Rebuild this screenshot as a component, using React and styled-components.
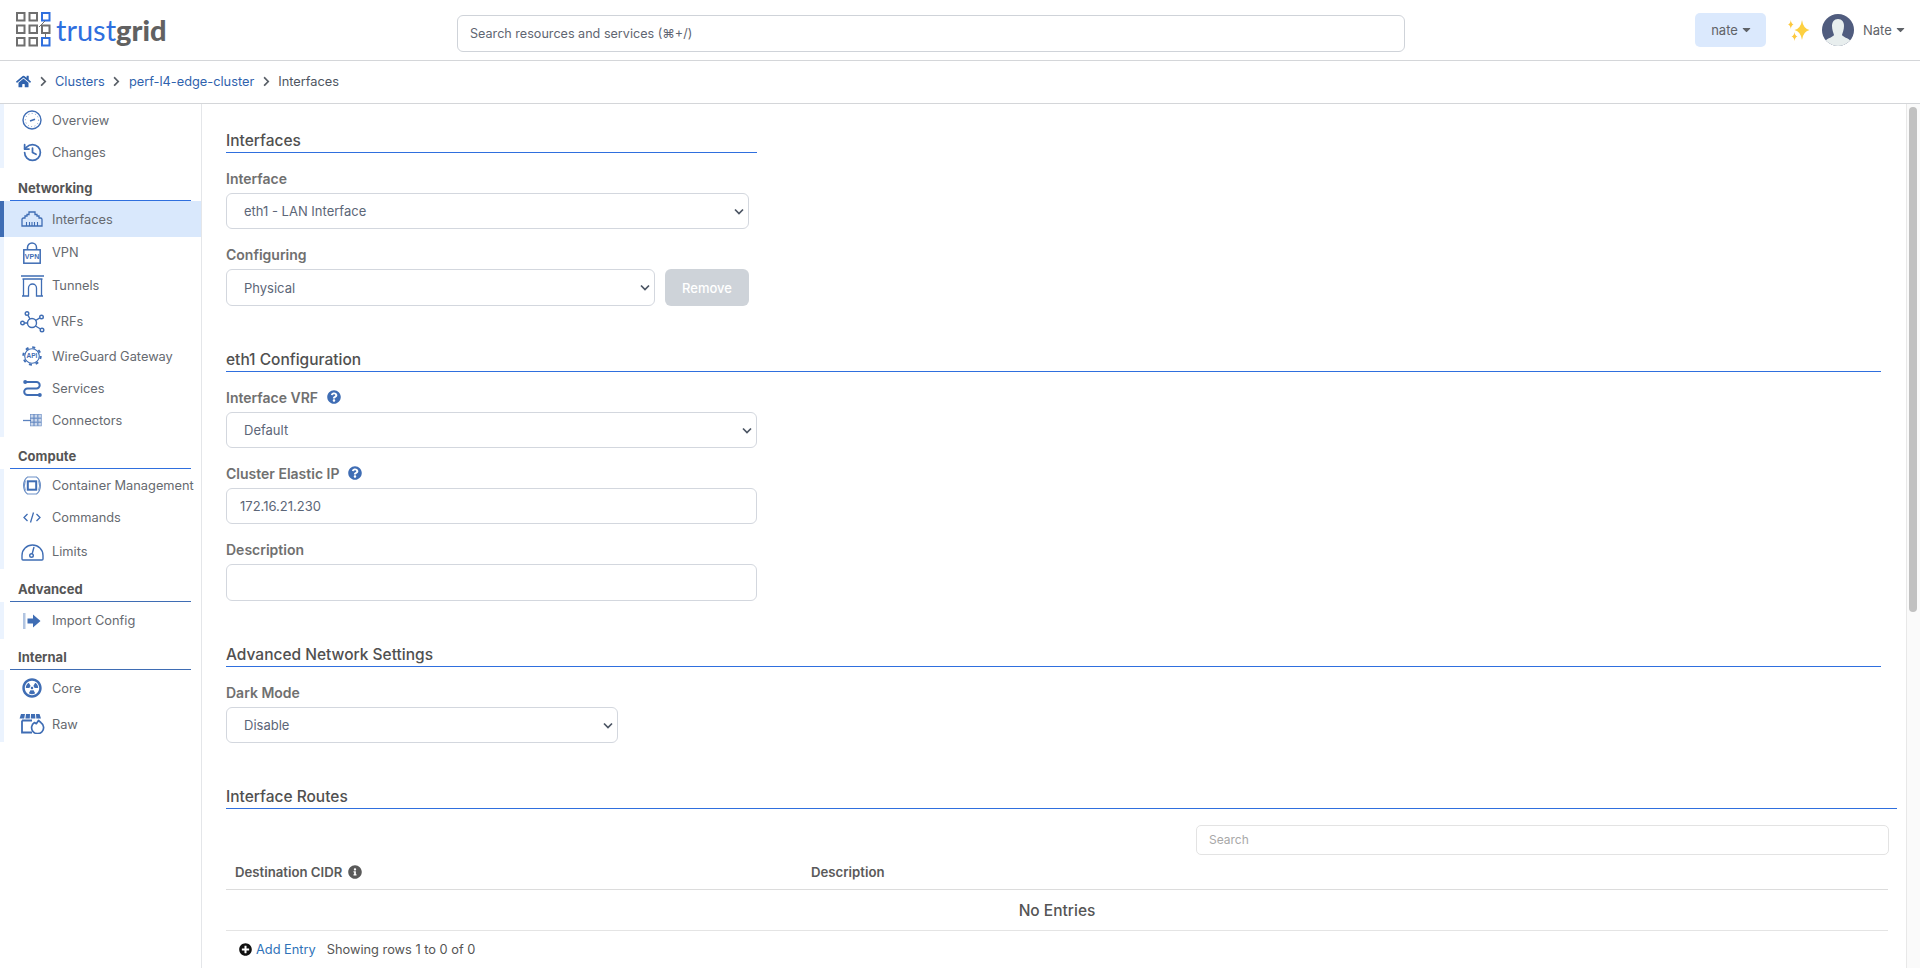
import React from "react";
import styled, { createGlobalStyle } from "styled-components";
import { FaHome, FaChevronRight, FaQuestionCircle, FaInfoCircle, FaPlusCircle, FaRadiationAlt, FaCaretDown } from "react-icons/fa";
import { History } from "lucide-react";

const BLUE = "#3f6db4";
const LINE = "#2f6fde";

const GlobalStyle = createGlobalStyle`
  html, body { margin: 0; height: 100%; overflow: hidden; background: #fff; }
  body { font-family: Inter, "Liberation Sans", sans-serif; font-size: 13px; color: #5f5f5f; }
  * { box-sizing: border-box; }
`;

const Page = styled.div`
  height: 100vh;
  display: flex;
  flex-direction: column;
`;

const Header = styled.header`
  height: 61px;
  flex: none;
  display: flex;
  align-items: center;
  padding: 0 16px 1px;
  border-bottom: 1px solid #d4d6d9;
`;

const Logo = styled.div`
  width: 441px;
  flex: none;
  display: flex;
  align-items: center;
  gap: 5px;
`;

const LogoText = styled.div`
  font-family: Lato, sans-serif;
  font-size: 29px;
  line-height: 34px;
  color: #2f6fde;
  font-weight: 400;
  b {
    font-weight: 900;
    color: #616161;
  }
`;

const SearchBox = styled.input`
  width: 948px;
  height: 37px;
  flex: none;
  margin-top: 7px;
  border: 1px solid #cfd3d9;
  border-radius: 6px;
  padding: 0 12px;
  font: 12.6px Inter, sans-serif;
  color: #5f6672;
  &::placeholder {
    color: #5f6672;
    opacity: 1;
  }
`;

const HeaderRight = styled.div`
  flex: 1;
  display: flex;
  align-items: center;
  padding-left: 290px;
`;

const TenantButton = styled.div`
  width: 71px;
  height: 34px;
  flex: none;
  display: flex;
  align-items: center;
  justify-content: center;
  gap: 2px;
  padding-left: 3px;
  background: #dbe9fd;
  border-radius: 5px;
  color: #5f6368;
`;

const UserName = styled.div`
  display: flex;
  align-items: center;
  gap: 2px;
  margin-left: 9px;
  color: #5f6368;
`;

const Sparkle = styled.svg`
  margin: 2px 12px 0 22px;
  flex: none;
`;

const Crumbs = styled.nav`
  height: 43px;
  flex: none;
  display: flex;
  align-items: center;
  padding: 0 16px 1px;
  border-bottom: 1px solid #d4d6d9;
  font-size: 12.8px;
  color: #4e5561;
`;

const CrumbLink = styled.a`
  color: #2f62ad;
`;

const CrumbSep = styled.span`
  display: flex;
  color: #5a6068;
  margin: 0 6.5px;
`;

const Body = styled.div`
  flex: 1;
  min-height: 0;
  display: flex;
`;

const Sidebar = styled.aside`
  width: 202px;
  flex: none;
  border-right: 1px solid #e4e6e9;
`;

const NavGroup = styled.ul`
  list-style: none;
  margin: 0;
  padding: 0;
  border-left: 4px solid #ebf3fe;
`;

const NavItem = styled.li`
  height: ${({ $h }) => $h || 32}px;
  margin-left: -4px;
  width: 201px;
  display: flex;
  align-items: center;
  padding-left: 14px;
  border-left: 4px solid ${({ $active }) => ($active ? "#3f6db4" : "transparent")};
  background: ${({ $active }) => ($active ? "#d9e8fc" : "none")};
  color: #666a70;
  font-size: 12.8px;
`;

const NavIcon = styled.span`
  width: 28px;
  margin-right: 6px;
  flex: none;
  display: flex;
  justify-content: center;
  color: ${BLUE};
`;

const NavHeading = styled.div`
  height: ${({ $h }) => $h || 33}px;
  margin: 0 10px 0 10px;
  padding: 0 0 4px 8px;
  display: flex;
  align-items: flex-end;
  border-bottom: 1px solid ${({ $line }) => $line || LINE};
  font-weight: 700;
  color: #555;
`;

const Main = styled.main`
  flex: 1;
  min-width: 0;
  overflow: hidden;
`;

const ScrollTrack = styled.div`
  width: 14px;
  flex: none;
  padding: 3px 3px 0 2px;
  background: #fafafa;
  border-left: 1px solid #e8e8e8;
`;

const ScrollThumb = styled.div`
  height: 505px;
  background: #c1c1c1;
  border-radius: 4px;
`;

const Content = styled.div`
  padding: 26px 9px 0 24px;
`;

const Section = styled.section`
  max-width: ${({ $w }) => ($w ? `${$w}px` : "none")};
  margin: ${({ $top }) => $top ?? 43}px ${({ $right }) => $right ?? 16}px 0 0;
`;

const SectionTitle = styled.h2`
  margin: 0 0 ${({ $gap }) => $gap ?? 17}px;
  height: 23px;
  line-height: 22px;
  font-size: 15.5px;
  font-weight: 500;
  color: #505050;
  border-bottom: 1px solid ${LINE};
`;

const Field = styled.div`
  width: ${({ $w }) => ($w ? `${$w}px` : "100%")};
  margin-top: ${({ $top }) => $top ?? 17}px;
`;

const Label = styled.label`
  display: flex;
  align-items: center;
  gap: 9px;
  height: 18px;
  padding-bottom: 2px;
  margin-bottom: 5px;
  font-size: 14px;
  font-weight: 600;
  color: #707070;
  svg {
    color: ${BLUE};
  }
`;

const chevron = encodeURIComponent(
  '<svg xmlns="http://www.w3.org/2000/svg" width="10" height="7" viewBox="0 0 10 7"><path d="M1 1.5l4 4 4-4" fill="none" stroke="#4c5564" stroke-width="1.7"/></svg>'
);

const Select = styled.select`
  display: block;
  width: 100%;
  height: ${({ $h }) => $h || 36}px;
  appearance: none;
  padding: 0 0 0 17px;
  border: 1px solid #d3d7de;
  border-radius: 6px;
  background: #fff url("data:image/svg+xml,${chevron}") no-repeat right 4px center;
  font: 13px Inter, sans-serif;
  color: #5c6678;
`;

const TextInput = styled.input`
  display: block;
  width: 100%;
  height: ${({ $h }) => $h || 36}px;
  padding: 0 13px;
  border: 1px solid #d3d7de;
  border-radius: 6px;
  font: 13px Inter, sans-serif;
  color: #5c6678;
`;

const ConfigRow = styled.div`
  display: flex;
  align-items: center;
  gap: 10px;
  width: 523px;
`;

const RemoveButton = styled.button`
  width: 84px;
  height: 37px;
  flex: none;
  border: 0;
  border-radius: 6px;
  background: #ced3d9;
  color: #fff;
  font: 500 13px Inter, sans-serif;
`;

const TableSearchRow = styled.div`
  display: flex;
  justify-content: flex-end;
  margin: 16px 8px 0 0;
`;

const TableSearch = styled.input`
  width: 693px;
  height: 30px;
  padding: 0 12px 2px;
  border: 1px solid #e3e3e3;
  border-radius: 5px;
  font: 12px Inter, sans-serif;
  &::placeholder {
    color: #a8a8a8;
    opacity: 1;
  }
`;

const Table = styled.div`
  margin-right: 9px;
`;

const TableHead = styled.div`
  height: 35px;
  display: grid;
  grid-template-columns: 576px 1fr;
  align-items: center;
  padding-left: 9px;
  border-bottom: 1px solid #dcdcdc;
  font-weight: 600;
  font-size: 13.2px;
  color: #5a5a5a;
`;

const HeadCell = styled.div`
  display: flex;
  align-items: center;
  gap: 6px;
`;

const EmptyRow = styled.div`
  height: 41px;
  display: flex;
  align-items: center;
  justify-content: center;
  border-bottom: 1px solid #e4e4e4;
  font-size: 15.5px;
  font-weight: 500;
  color: #555;
`;

const TableFooter = styled.div`
  height: 36px;
  display: flex;
  align-items: center;
  padding-left: 13px;
  font-size: 12.8px;
  color: #555;
`;

const AddLink = styled.a`
  display: flex;
  align-items: center;
  gap: 4px;
  margin-right: 11px;
  color: #2f72b8;
  svg {
    color: #111;
  }
`;

const stroke = { fill: "none", stroke: "currentColor" };

const OverviewIcon = () => (
  <svg width="20" height="20" viewBox="0 0 20 20" {...stroke}>
    <circle cx="10" cy="10" r="9" strokeWidth="1.4" />
    <circle cx="10" cy="10" r="6.6" strokeWidth="1" strokeDasharray="1 2.4" opacity=".7" />
    <path d="M8 11l5-1.7" strokeWidth="1.6" />
  </svg>
);

const JackIcon = () => (
  <svg width="22" height="16" viewBox="0 0 22 16" {...stroke} strokeWidth="1.3">
    <path d="M1 15V8.500q0-1.500 1.500-1.500H4V5h2V3.500h2V1h6v2.500h2V5h2v2h1.500Q21 7 21 8.500V15z" />
    <path d="M5.500 15V11M8.500 15V11M11 15V11M13.500 15V11M16.500 15V11" strokeWidth="1.100" />
  </svg>
);

const VpnIcon = () => (
  <svg width="18" height="22" viewBox="0 0 18 22" {...stroke}>
    <path d="M4.500 8V5.500a4.500 4.500 0 0 1 9 0V8" strokeWidth="1.500" />
    <rect x=".8" y="7.800" width="16.400" height="13.400" strokeWidth="1.500" />
    <text x="9" y="17" textAnchor="middle" fontSize="7" fontWeight="700" fontFamily="Liberation Sans, sans-serif" fill="currentColor" stroke="none">VPN</text>
  </svg>
);

const ArchIcon = () => (
  <svg width="23" height="22" viewBox="0 0 23 22" {...stroke} strokeWidth="1.300">
    <path d="M0 1h23M1.500 4h20" />
    <path d="M2.500 4V21H7.500V13a4 4 0 0 1 8 0v8H20.500V4M1 21h6.500M15.500 21H22" />
  </svg>
);

const VrfIcon = () => (
  <svg width="25" height="22" viewBox="0 0 25 22" {...stroke} strokeWidth="1.400">
    <circle cx="12" cy="12" r="4.500" />
    <circle cx="7" cy="2.500" r="1.800" />
    <circle cx="21.500" cy="6" r="1.800" />
    <circle cx="2.500" cy="12" r="1.800" />
    <circle cx="22" cy="19" r="1.800" />
    <path d="M8 4.300l2 3.700M19.800 6.800l-4.200 2.700M4.500 12h3M15.500 15l5 3" />
  </svg>
);

const ApiGearIcon = () => (
  <svg width="20" height="20" viewBox="0 0 20 20" {...stroke}>
    <circle cx="10" cy="10" r="7.300" strokeWidth="1.100" />
    <circle cx="10" cy="10" r="8.700" strokeWidth="2" strokeDasharray="3 3.830" />
    <text x="10" y="12.400" textAnchor="middle" fontSize="6.500" fontWeight="700" fontFamily="Liberation Sans, sans-serif" fill="currentColor" stroke="none">API</text>
  </svg>
);

const RouteIcon = () => (
  <svg width="19" height="17" viewBox="0 0 19 17" {...stroke} strokeWidth="2">
    <path d="M2 2h11.500a3.200 3.200 0 0 1 0 6.400H4.500a3.200 3.200 0 0 0 0 6.600H17" />
    <circle cx="2.200" cy="2" r="2" fill="currentColor" stroke="none" />
    <circle cx="16.800" cy="15" r="2" fill="currentColor" stroke="none" />
  </svg>
);

const ConnectorIcon = () => {
  const cells = [];
  for (let x = 0; x < 3; x++) for (let y = 0; y < 3; y++) cells.push([7.500 + x * 3.800, 0.500 + y * 4, x + y * 3]);
  return (
    <svg width="19" height="13" viewBox="0 0 19 13">
      <path d="M0 6.500h8" stroke="currentColor" strokeWidth="1.300" opacity=".85" />
      {cells.map(([x, y, k]) => (
        <rect key={k} x={x} y={y} width="3.200" height="3.400" fill="currentColor" fillOpacity=".35" stroke="currentColor" strokeWidth=".7" opacity=".75" />
      ))}
    </svg>
  );
};

const ContainerIcon = () => (
  <svg width="20" height="19" viewBox="0 0 20 19" {...stroke}>
    <rect x="5.800" y="5.300" width="8.400" height="8.400" strokeWidth="2" />
    <path d="M5.500 1C.2 5 .2 14 5.500 18M14.500 1c5.300 4 5.300 13 0 17M5 1h10M5 18h10" strokeWidth="1.100" opacity=".75" />
    <path d="M3.300 4.500c-1 3-1 7 0 10M16.700 4.500c1 3 1 7 0 10" strokeWidth="1.100" opacity=".75" />
  </svg>
);

const CodeIcon = () => (
  <svg width="18" height="11" viewBox="0 0 18 11" {...stroke} strokeWidth="1.300">
    <path d="M4.500 2L1 5.500 4.500 9M13.500 2L17 5.500 13.500 9M10.500 .5l-3 10" />
  </svg>
);

const LimitsIcon = () => (
  <svg width="23" height="20" viewBox="0 0 23 20" {...stroke} strokeWidth="1.400">
    <path d="M2 19h19a1 1 0 0 0 1-1v-3.500a10.500 10.500 0 0 0-21 0V18a1 1 0 0 0 1 1z" />
    <circle cx="10.500" cy="14.500" r="1.800" />
    <path d="M11.200 12.800L13 6" />
  </svg>
);

const ImportIcon = () => (
  <svg width="18" height="16" viewBox="0 0 18 16">
    <rect x="0" y="0" width="2.500" height="16" fill="currentColor" opacity=".4" />
    <path d="M4.500 5.500H10V1.500L17.500 8 10 14.500v-4H4.500z" fill="currentColor" />
  </svg>
);

const RawIcon = () => (
  <svg width="26" height="20" viewBox="0 0 26 20" {...stroke}>
    <path d="M2 0h4l-.8 4.500H.6zM7 0h4l-.2 4.500H6.400zM12 0h4l.4 4.500h-4.600zM17 0h3.500l1.500 4.500h-4.700z" fill="currentColor" stroke="none" />
    <path d="M3 6.500v12h10M3 6.500h10" strokeWidth="1.800" />
    <path d="M19.500 6.500l2.500 2.200a6 6 0 1 1-6.500-.2l1.800 1.200z" strokeWidth="1.700" strokeLinejoin="round" />
  </svg>
);

const star = (cx, cy, rx, ry) =>
  `M${cx} ${cy - ry}Q${cx + rx * 0.15} ${cy - ry * 0.15} ${cx + rx} ${cy}Q${cx + rx * 0.15} ${cy + ry * 0.15} ${cx} ${cy + ry}Q${cx - rx * 0.15} ${cy + ry * 0.15} ${cx - rx} ${cy}Q${cx - rx * 0.15} ${cy - ry * 0.15} ${cx} ${cy - ry}z`;

const SparklesIcon = () => (
  <Sparkle width="22" height="21" viewBox="0 0 22 21">
    <path d={star(14, 10, 7.500, 10)} fill="#fdd040" />
    <path d={star(2.800, 4.500, 2.800, 4.500)} fill="#fdc93e" />
    <path d={star(6.500, 16.500, 3, 4.500)} fill="#fdc93e" />
  </Sparkle>
);

const Avatar = () => (
  <svg width="32" height="32" viewBox="0 0 32 32">
    <clipPath id="avatarClip">
      <circle cx="16" cy="16" r="16" />
    </clipPath>
    <g clipPath="url(#avatarClip)">
      <rect width="32" height="32" fill="#505c7e" />
      <path d="M16 5c4 0 6 3 6 7 0 4-1.500 7-2 9 1 2 6 3 9 6v5H3v-5c3-3 8-4 9-6-.5-2-2-5-2-9 0-4 2-7 6-7z" fill="#e8eeee" />
    </g>
  </svg>
);

const LogoMark = () => {
  const blue = "#2f6fde";
  const grey = "#6f6f6f";
  const squares = [];
  for (let row = 0; row < 3; row++) {
    for (let col = 0; col < 3; col++) {
      const isBlue = col === 2 && row !== 1;
      squares.push(
        <rect key={`${row}-${col}`} x={1 + col * 12.500} y={1 + row * 12.500} width="7.500" height="7.500" fill="none" stroke={isBlue ? blue : grey} strokeWidth="2" />
      );
    }
  }
  return (
    <svg width="35" height="35" viewBox="0 0 35 35">
      {squares}
      <path d="M23 15l6-6M29.500 21v5" stroke={grey} strokeWidth="1" fill="none" />
    </svg>
  );
};

const navTop = [
  { label: "Overview", icon: <OverviewIcon /> },
  { label: "Changes", icon: <History size={21} strokeWidth={2} /> },
];

const navNetworking = [
  { label: "Interfaces", icon: <JackIcon />, h: 36, active: true },
  { label: "VPN", icon: <VpnIcon />, h: 31 },
  { label: "Tunnels", icon: <ArchIcon />, h: 35 },
  { label: "VRFs", icon: <VrfIcon />, h: 37 },
  { label: "WireGuard Gateway", icon: <ApiGearIcon />, h: 32 },
  { label: "Services", icon: <RouteIcon />, h: 32 },
  { label: "Connectors", icon: <ConnectorIcon />, h: 33 },
];

const navCompute = [
  { label: "Container Management", icon: <ContainerIcon /> },
  { label: "Commands", icon: <CodeIcon /> },
  { label: "Limits", icon: <LimitsIcon />, h: 36 },
];

const navAdvanced = [{ label: "Import Config", icon: <ImportIcon />, h: 37 }];

const navInternal = [
  { label: "Core", icon: <FaRadiationAlt size={20} />, h: 36 },
  { label: "Raw", icon: <RawIcon />, h: 36 },
];

function Nav({ items }) {
  return (
    <NavGroup>
      {items.map((item) => (
        <NavItem key={item.label} $h={item.h} $active={item.active}>
          <NavIcon>{item.icon}</NavIcon>
          {item.label}
        </NavItem>
      ))}
    </NavGroup>
  );
}

function Sep() {
  return (
    <CrumbSep>
      <FaChevronRight size={11} />
    </CrumbSep>
  );
}

function App() {
  return (
    <Page>
      <GlobalStyle />
      <Header>
        <Logo>
          <LogoMark />
          <LogoText>
            trust<b>grid</b>
          </LogoText>
        </Logo>
        <SearchBox placeholder="Search resources and services (⌘+/)" readOnly />
        <HeaderRight>
          <TenantButton>
            nate <FaCaretDown size={13} />
          </TenantButton>
          <SparklesIcon />
          <Avatar />
          <UserName>
            Nate <FaCaretDown size={13} />
          </UserName>
        </HeaderRight>
      </Header>
      <Crumbs>
        <CrumbLink>
          <FaHome size={15} style={{ display: "block" }} />
        </CrumbLink>
        <Sep />
        <CrumbLink>Clusters</CrumbLink>
        <Sep />
        <CrumbLink>perf-l4-edge-cluster</CrumbLink>
        <Sep />
        Interfaces
      </Crumbs>
      <Body>
        <Sidebar>
          <Nav items={navTop} />
          <NavHeading>Networking</NavHeading>
          <Nav items={navNetworking} />
          <NavHeading $h={32}>Compute</NavHeading>
          <Nav items={navCompute} />
          <NavHeading $h={33} $line="#3f6db4">Advanced</NavHeading>
          <Nav items={navAdvanced} />
          <NavHeading $h={31} $line="#3f6db4">Internal</NavHeading>
          <Nav items={navInternal} />
        </Sidebar>
        <Main>
          <Content>
            <Section $w={531} $top={0}>
              <SectionTitle>Interfaces</SectionTitle>
              <Field $w={523}>
                <Label>Interface</Label>
                <Select defaultValue="eth1">
                  <option value="eth1">eth1 - LAN Interface</option>
                </Select>
              </Field>
              <Field>
                <Label>Configuring</Label>
                <ConfigRow>
                  <Select $h={37} defaultValue="physical">
                    <option value="physical">Physical</option>
                  </Select>
                  <RemoveButton>Remove</RemoveButton>
                </ConfigRow>
              </Field>
            </Section>
            <Section>
              <SectionTitle>eth1 Configuration</SectionTitle>
              <Field $w={531}>
                <Label>
                  Interface VRF <FaQuestionCircle size={14} />
                </Label>
                <Select defaultValue="default">
                  <option value="default">Default</option>
                </Select>
              </Field>
              <Field $w={531}>
                <Label>
                  Cluster Elastic IP <FaQuestionCircle size={14} />
                </Label>
                <TextInput defaultValue="172.16.21.230" />
              </Field>
              <Field $w={531}>
                <Label>Description</Label>
                <TextInput $h={37} />
              </Field>
            </Section>
            <Section>
              <SectionTitle>Advanced Network Settings</SectionTitle>
              <Field $w={392}>
                <Label>Dark Mode</Label>
                <Select defaultValue="disable">
                  <option value="disable">Disable</option>
                </Select>
              </Field>
            </Section>
            <Section $right={0}>
              <SectionTitle $gap={0}>Interface Routes</SectionTitle>
              <TableSearchRow>
                <TableSearch placeholder="Search" />
              </TableSearchRow>
              <Table>
                <TableHead>
                  <HeadCell>
                    Destination CIDR <FaInfoCircle size={14} />
                  </HeadCell>
                  <HeadCell>Description</HeadCell>
                </TableHead>
                <EmptyRow>No Entries</EmptyRow>
                <TableFooter>
                  <AddLink>
                    <FaPlusCircle size={13} /> Add Entry
                  </AddLink>
                  Showing rows 1 to 0 of 0
                </TableFooter>
              </Table>
            </Section>
          </Content>
        </Main>
        <ScrollTrack>
          <ScrollThumb />
        </ScrollTrack>
      </Body>
    </Page>
  );
}

export default App;
